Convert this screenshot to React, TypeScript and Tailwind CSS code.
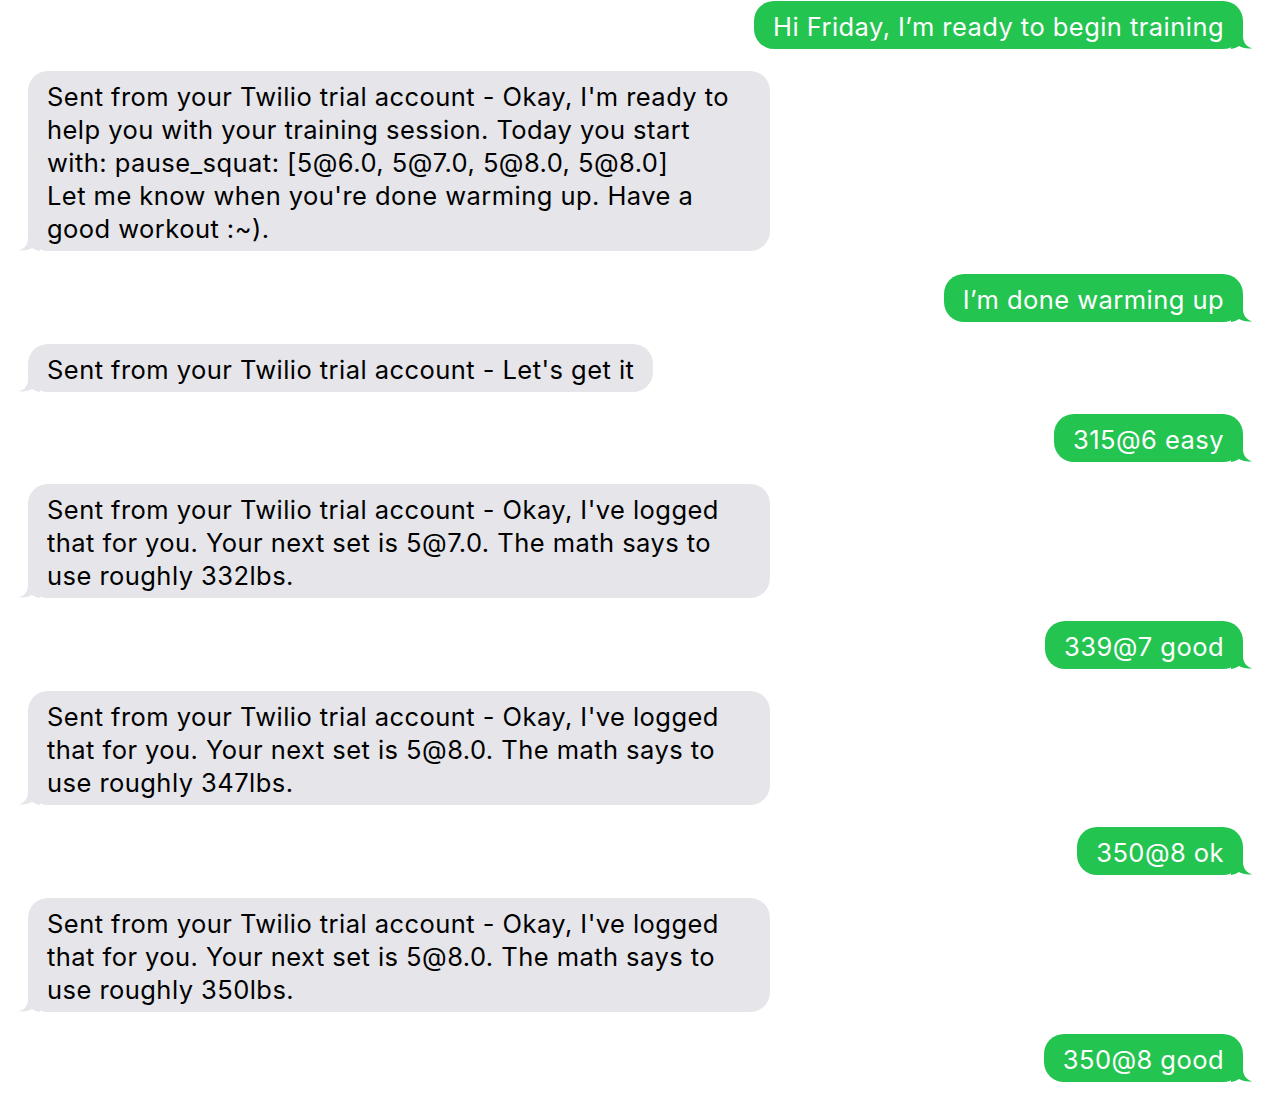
import React from 'react';

type Msg = { from: 'me' | 'bot'; lines: string[] };

const PREFIX = 'Sent from your Twilio trial account - ';

const MESSAGES: Msg[] = [
  { from: 'me', lines: ['Hi Friday, I\u2019m ready to begin training'] },
  {
    from: 'bot',
    lines: [
      `${PREFIX}Okay, I'm ready to`,
      'help you with your training session. Today you start',
      'with: pause_squat: [5@6.0, 5@7.0, 5@8.0, 5@8.0]',
      "Let me know when you're done warming up. Have a",
      'good workout :~).',
    ],
  },
  { from: 'me', lines: ['I\u2019m done warming up'] },
  { from: 'bot', lines: [`${PREFIX}Let's get it`] },
  { from: 'me', lines: ['315@6 easy'] },
  {
    from: 'bot',
    lines: [
      `${PREFIX}Okay, I've logged`,
      'that for you. Your next set is 5@7.0. The math says to',
      'use roughly 332lbs.',
    ],
  },
  { from: 'me', lines: ['339@7 good'] },
  {
    from: 'bot',
    lines: [
      `${PREFIX}Okay, I've logged`,
      'that for you. Your next set is 5@8.0. The math says to',
      'use roughly 347lbs.',
    ],
  },
  { from: 'me', lines: ['350@8 ok'] },
  {
    from: 'bot',
    lines: [
      `${PREFIX}Okay, I've logged`,
      'that for you. Your next set is 5@8.0. The math says to',
      'use roughly 350lbs.',
    ],
  },
  { from: 'me', lines: ['350@8 good'] },
];

/** Bubble tail, drawn for the right side; mirrored for incoming messages. */
function Tail({ className }: { className: string }) {
  return (
    <svg
      aria-hidden
      className={className}
      height="22"
      viewBox="0 0 22 22"
      width="22"
    >
      <path d="M0 0H12V9C12 15 15 19.5 21 21.3C16 22 11 20.8 8 19C5.5 20.6 3 21.6 0 22Z" />
    </svg>
  );
}

function Bubble({ msg }: { msg: Msg }) {
  const mine = msg.from === 'me';
  // wrapped incoming messages fill the max bubble width
  const wide = !mine && msg.lines.length > 1;
  return (
    <div className={mine ? 'flex justify-end' : 'flex justify-start'}>
      <div
        className={`relative rounded-[20px] px-[19px] pt-[9px] pb-[6px] text-[25.5px] leading-[33px] tracking-[0.45px] whitespace-nowrap ${
          mine ? 'bg-[#24c450] text-white' : 'bg-[#e5e5ea] text-black'
        } ${wide ? 'w-[742px]' : ''}`}
      >
        {msg.lines.map((l, i) => (
          <div key={i}>{l}</div>
        ))}
        {mine ? (
          <Tail className="absolute -right-[10px] bottom-0 fill-[#24c450]" />
        ) : (
          <Tail className="absolute -left-[10px] bottom-0 -scale-x-100 fill-[#e5e5ea]" />
        )}
      </div>
    </div>
  );
}

export default function App() {
  return (
    <div
      className="flex min-h-[1098px] w-[1278px] flex-col gap-[22.3px] bg-white pt-px pr-[35px] pl-[28px]"
      style={{ fontFamily: 'Inter, "Noto Sans", sans-serif' }}
    >
      {MESSAGES.map((m, i) => (
        <Bubble key={i} msg={m} />
      ))}
    </div>
  );
}
